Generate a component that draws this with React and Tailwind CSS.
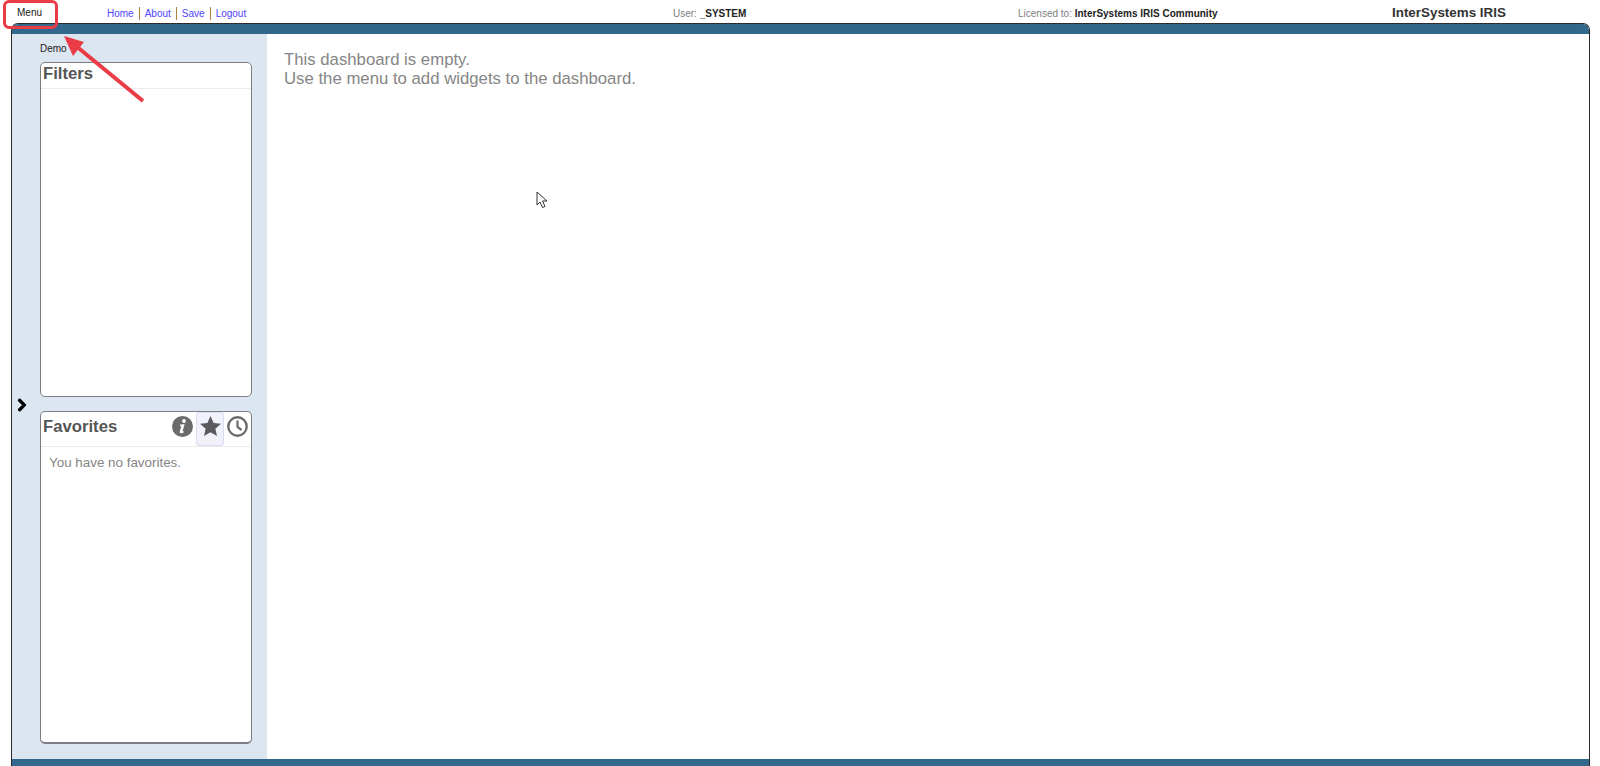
import React from "react";
import { FaChevronRight } from "react-icons/fa";

const Sep = () => <span className="mx-[5px] inline-block h-[13px] w-px bg-[#b5823f] align-middle" />;

function Panel({ className, title, right, children, headerClass, titleClass }) {
  return (
    <section className={`rounded-[5px] border border-[#7d7d85] bg-white ${className}`}>
      <div className={`flex justify-between border-b border-[#ececec] pl-[2px] ${headerClass}`}>
        <h2 className={`text-[16.7px] font-bold leading-[20px] text-[#555] ${titleClass}`}>{title}</h2>
        {right}
      </div>
      {children}
    </section>
  );
}

const InfoIcon = () => (
  <svg width="21" height="21" viewBox="0 0 21 21" className="mr-[3px]">
    <circle cx="10.5" cy="10.5" r="10.5" fill="#6b6b6b" />
    <circle cx="12" cy="5" r="1.9" fill="#fff" />
    <path d="M8.2 8.6 L12.6 8.2 L10.6 15 Q10.4 16 11.8 15.2 L12.2 16 Q10.4 17.6 8.6 17.3 Q7.4 17 7.8 15.4 L9.3 10.2 L8 10 Z" fill="#fff" />
  </svg>
);

const StarIcon = () => (
  <svg width="21" height="20" viewBox="0 0 24 23">
    <polygon points="12,0 15.6,8 24,8.8 17.6,14.6 19.5,23 12,18.6 4.5,23 6.4,14.6 0,8.8 8.4,8" fill="#5a5a5f" />
  </svg>
);

const ClockIcon = () => (
  <svg width="21" height="21" viewBox="0 0 21 21" className="mx-[3px]" fill="none" stroke="#6b6b6b">
    <circle cx="10.5" cy="10.5" r="9.2" strokeWidth="2.4" />
    <path d="M10.5 4.5 V11 L14.5 14" strokeWidth="2.2" />
  </svg>
);

export default function App() {
  return (
    <div className="relative flex h-[766px] w-[1600px] flex-col overflow-hidden bg-white font-['Liberation_Sans',Arial,sans-serif]">
      <header className="flex h-[23px] shrink-0 items-center text-[10px]">
        <div className="w-[107px] pl-[17px] pt-[2px] text-[#222]">Menu</div>
        <nav className="w-[566px] pt-[3px] text-[#4f43ff]">
          <a>Home</a><Sep /><a>About</a><Sep /><a>Save</a><Sep /><a>Logout</a>
        </nav>
        <div className="w-[345px] pt-[3px] text-[#808080]">User: <b className="text-[#222]">_SYSTEM</b></div>
        <div className="w-[374px] pt-[3px] text-[#808080]">Licensed to: <b className="text-[#222]">InterSystems IRIS Community</b></div>
        <div className="pt-[3px] text-[13.4px] font-bold text-[#333]">InterSystems IRIS</div>
      </header>

      <div className="ml-[11px] mr-[10px] flex min-h-0 flex-1 flex-col rounded-t-[7px] border-x border-t border-[#2b2b2b]">
        <div className="h-[10px] shrink-0 rounded-t-[6px] bg-[#31688c]" />
        <div className="flex min-h-0 flex-1">
          <aside className="flex w-[255px] shrink-0 bg-[#dce6f1]">
            <div className="flex w-[28px] shrink-0 items-center justify-center">
              <FaChevronRight className="ml-[-8px] mt-[17px] text-[14px] text-black stroke-[40px]" />
            </div>
            <div className="flex w-[212px] flex-col pt-[7px]">
              <div className="h-[21px] text-[10px] text-[#222]">Demo</div>
              <Panel className="h-[335px]" title="Filters" headerClass="h-[26px]" titleClass="pt-[1px]" />
              <Panel
                className="mt-[14px] h-[333px] !border-b-2"
                title="Favorites"
                headerClass="h-[35px] items-center"
                titleClass="pb-[4px]"
                right={
                  <div className="flex h-[34px] items-start text-[#666]">
                    <div className="pt-[4px]"><InfoIcon /></div>
                    <span className="flex h-[34px] w-[28px] justify-center rounded-[3px] border border-[#dcdcf5] bg-[#f1f1fb] pt-[3px]">
                      <StarIcon />
                    </span>
                    <div className="pt-[4px]"><ClockIcon /></div>
                  </div>
                }
              >
                <p className="pl-[8px] pt-[6px] text-[13.4px] text-[#858585]">You have no favorites.</p>
              </Panel>
            </div>
          </aside>
          <main className="flex-1 bg-white pl-[17px] pt-[16px] text-[16.75px] leading-[19px] text-[#858585]">
            <p>This dashboard is empty.</p>
            <p>Use the menu to add widgets to the dashboard.</p>
          </main>
        </div>
        <div className="h-[7px] shrink-0 bg-[#31688c]" />
      </div>

      <div className="absolute left-[3px] top-0 h-[29px] w-[55px] rounded-[6px] border-[3px] border-[#ea3c46]" />
      <svg className="absolute left-0 top-0" width="160" height="110" viewBox="0 0 160 110">
        <line x1="143" y1="101" x2="76" y2="46" stroke="#ea3c46" strokeWidth="4" />
        <polygon points="64,36 84,42 73,56" fill="#ea3c46" />
      </svg>
      <svg className="absolute left-[536px] top-[191px]" width="14" height="20" viewBox="0 0 14 20">
        <path d="M1 1 L1 14 L4 11 L6.5 16.5 L9 15.5 L6.5 10 L11 10 Z" fill="#fff" stroke="#333" strokeWidth="1" />
      </svg>
    </div>
  );
}
